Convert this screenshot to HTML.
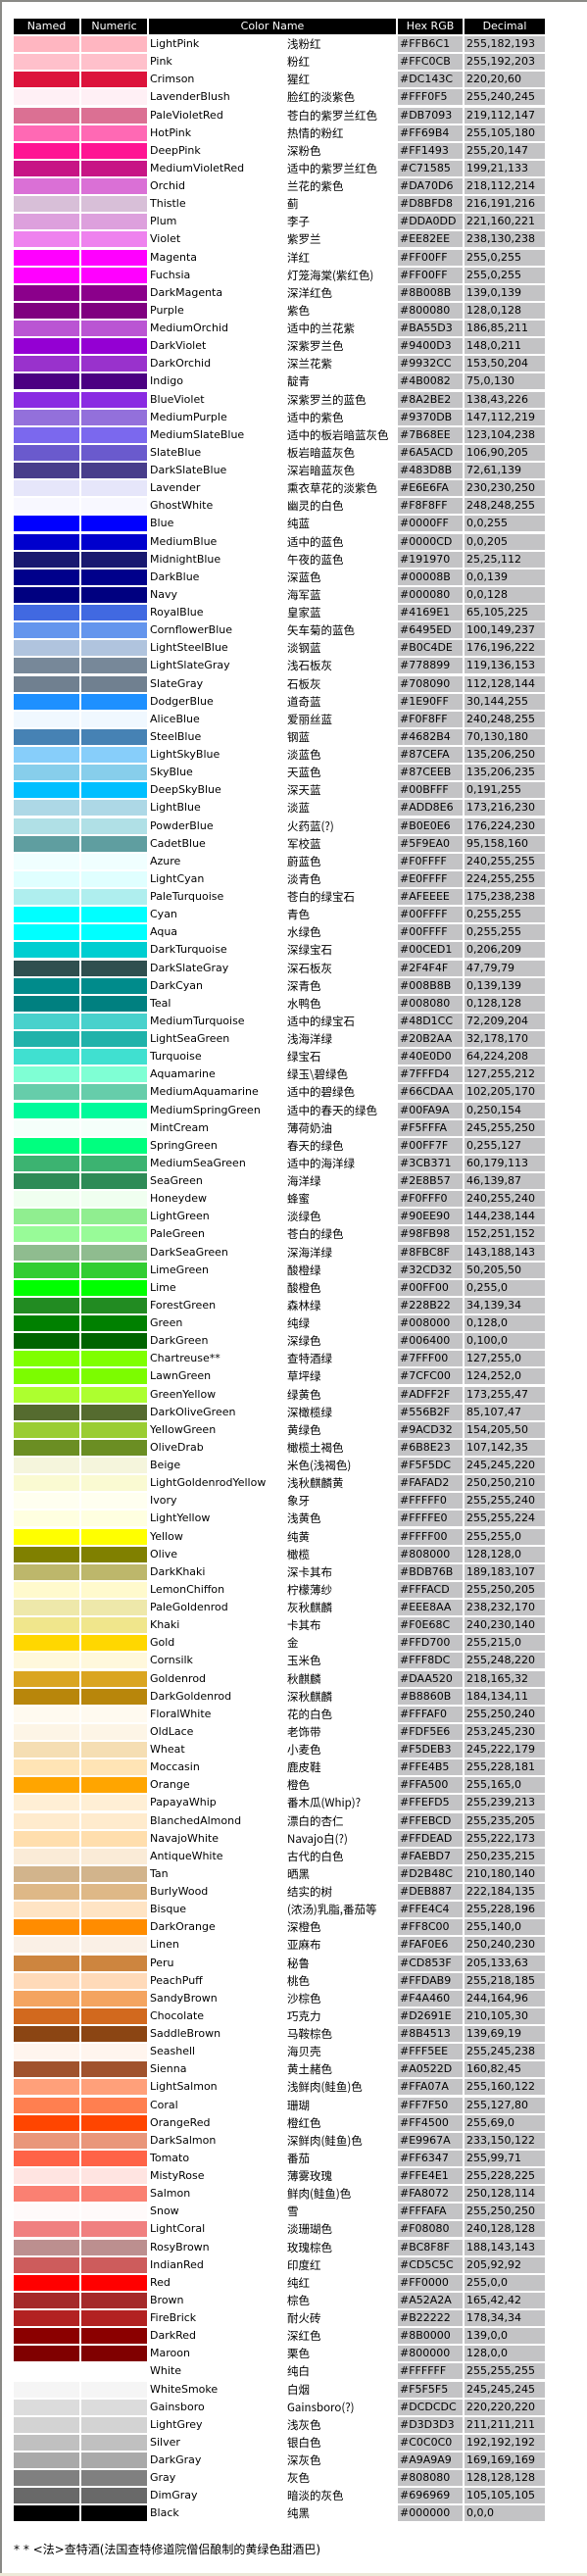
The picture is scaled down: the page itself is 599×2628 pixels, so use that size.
<!DOCTYPE html>
<html><head><meta charset="utf-8"><style>
html,body{margin:0;padding:0;background:#fff}
body{width:599px;height:2628px;position:relative;overflow:hidden;font-family:"DejaVu Sans","Liberation Sans","Noto Sans CJK SC",sans-serif;font-size:11px;color:#000}
.fr{position:absolute;left:0;top:0;width:599px;height:2625px;border-top:2px solid #8a8a86;border-left:2px solid #8a8a86;box-sizing:border-box}
.bt{position:absolute;left:0;top:2625px;width:599px;height:3px;background:#ece9d8}
.hd{position:absolute;left:0;top:19px;height:16px;width:599px}
.hd div{position:absolute;top:0;height:16px;background:#000;color:#fff;text-align:center;line-height:16px;font-size:11px}
#rows{position:absolute;left:0;top:37px;width:599px}
.r{position:relative;height:18.13px}
.r i,.r b,.r u,.r s,.r em{position:absolute;top:0;height:16px;line-height:16px;font-style:normal;font-weight:normal;text-decoration:none;white-space:nowrap}
.r i{left:14px;width:67px}
.r i+i{left:83px;width:67px}
.r b{left:153px}
.r u{left:293px;font-family:"Noto Sans CJK SC","WenQuanYi Zen Hei",sans-serif;font-size:11.5px}
.r s{left:406px;width:66px;background:#c3c3c5;padding-left:2px;box-sizing:border-box}
.r em{left:474px;width:82px;background:#c3c3c5;padding-left:2px;box-sizing:border-box}
.ft{position:absolute;left:14px;top:2592px;font-size:12px;font-family:"DejaVu Sans","Noto Sans CJK SC",sans-serif;white-space:nowrap}
</style></head><body>
<div class="fr"></div><div class="bt"></div>
<div class="hd">
<div style="left:14px;width:67px">Named</div>
<div style="left:83px;width:67px">Numeric</div>
<div style="left:152px;width:252px">Color Name</div>
<div style="left:406px;width:66px">Hex RGB</div>
<div style="left:474px;width:82px">Decimal</div>
</div>
<div id="rows">
<div class="r"><i style="background:#FFB6C1"></i><i style="background:#FFB6C1"></i><b>LightPink</b><u>浅粉红</u><s>#FFB6C1</s><em>255,182,193</em></div>
<div class="r"><i style="background:#FFC0CB"></i><i style="background:#FFC0CB"></i><b>Pink</b><u>粉红</u><s>#FFC0CB</s><em>255,192,203</em></div>
<div class="r"><i style="background:#DC143C"></i><i style="background:#DC143C"></i><b>Crimson</b><u>猩红</u><s>#DC143C</s><em>220,20,60</em></div>
<div class="r"><i style="background:#FFF0F5"></i><i style="background:#FFF0F5"></i><b>LavenderBlush</b><u>脸红的淡紫色</u><s>#FFF0F5</s><em>255,240,245</em></div>
<div class="r"><i style="background:#DB7093"></i><i style="background:#DB7093"></i><b>PaleVioletRed</b><u>苍白的紫罗兰红色</u><s>#DB7093</s><em>219,112,147</em></div>
<div class="r"><i style="background:#FF69B4"></i><i style="background:#FF69B4"></i><b>HotPink</b><u>热情的粉红</u><s>#FF69B4</s><em>255,105,180</em></div>
<div class="r"><i style="background:#FF1493"></i><i style="background:#FF1493"></i><b>DeepPink</b><u>深粉色</u><s>#FF1493</s><em>255,20,147</em></div>
<div class="r"><i style="background:#C71585"></i><i style="background:#C71585"></i><b>MediumVioletRed</b><u>适中的紫罗兰红色</u><s>#C71585</s><em>199,21,133</em></div>
<div class="r"><i style="background:#DA70D6"></i><i style="background:#DA70D6"></i><b>Orchid</b><u>兰花的紫色</u><s>#DA70D6</s><em>218,112,214</em></div>
<div class="r"><i style="background:#D8BFD8"></i><i style="background:#D8BFD8"></i><b>Thistle</b><u>蓟</u><s>#D8BFD8</s><em>216,191,216</em></div>
<div class="r"><i style="background:#DDA0DD"></i><i style="background:#DDA0DD"></i><b>Plum</b><u>李子</u><s>#DDA0DD</s><em>221,160,221</em></div>
<div class="r"><i style="background:#EE82EE"></i><i style="background:#EE82EE"></i><b>Violet</b><u>紫罗兰</u><s>#EE82EE</s><em>238,130,238</em></div>
<div class="r"><i style="background:#FF00FF"></i><i style="background:#FF00FF"></i><b>Magenta</b><u>洋红</u><s>#FF00FF</s><em>255,0,255</em></div>
<div class="r"><i style="background:#FF00FF"></i><i style="background:#FF00FF"></i><b>Fuchsia</b><u>灯笼海棠(紫红色)</u><s>#FF00FF</s><em>255,0,255</em></div>
<div class="r"><i style="background:#8B008B"></i><i style="background:#8B008B"></i><b>DarkMagenta</b><u>深洋红色</u><s>#8B008B</s><em>139,0,139</em></div>
<div class="r"><i style="background:#800080"></i><i style="background:#800080"></i><b>Purple</b><u>紫色</u><s>#800080</s><em>128,0,128</em></div>
<div class="r"><i style="background:#BA55D3"></i><i style="background:#BA55D3"></i><b>MediumOrchid</b><u>适中的兰花紫</u><s>#BA55D3</s><em>186,85,211</em></div>
<div class="r"><i style="background:#9400D3"></i><i style="background:#9400D3"></i><b>DarkViolet</b><u>深紫罗兰色</u><s>#9400D3</s><em>148,0,211</em></div>
<div class="r"><i style="background:#9932CC"></i><i style="background:#9932CC"></i><b>DarkOrchid</b><u>深兰花紫</u><s>#9932CC</s><em>153,50,204</em></div>
<div class="r"><i style="background:#4B0082"></i><i style="background:#4B0082"></i><b>Indigo</b><u>靛青</u><s>#4B0082</s><em>75,0,130</em></div>
<div class="r"><i style="background:#8A2BE2"></i><i style="background:#8A2BE2"></i><b>BlueViolet</b><u>深紫罗兰的蓝色</u><s>#8A2BE2</s><em>138,43,226</em></div>
<div class="r"><i style="background:#9370DB"></i><i style="background:#9370DB"></i><b>MediumPurple</b><u>适中的紫色</u><s>#9370DB</s><em>147,112,219</em></div>
<div class="r"><i style="background:#7B68EE"></i><i style="background:#7B68EE"></i><b>MediumSlateBlue</b><u>适中的板岩暗蓝灰色</u><s>#7B68EE</s><em>123,104,238</em></div>
<div class="r"><i style="background:#6A5ACD"></i><i style="background:#6A5ACD"></i><b>SlateBlue</b><u>板岩暗蓝灰色</u><s>#6A5ACD</s><em>106,90,205</em></div>
<div class="r"><i style="background:#483D8B"></i><i style="background:#483D8B"></i><b>DarkSlateBlue</b><u>深岩暗蓝灰色</u><s>#483D8B</s><em>72,61,139</em></div>
<div class="r"><i style="background:#E6E6FA"></i><i style="background:#E6E6FA"></i><b>Lavender</b><u>熏衣草花的淡紫色</u><s>#E6E6FA</s><em>230,230,250</em></div>
<div class="r"><i style="background:#F8F8FF"></i><i style="background:#F8F8FF"></i><b>GhostWhite</b><u>幽灵的白色</u><s>#F8F8FF</s><em>248,248,255</em></div>
<div class="r"><i style="background:#0000FF"></i><i style="background:#0000FF"></i><b>Blue</b><u>纯蓝</u><s>#0000FF</s><em>0,0,255</em></div>
<div class="r"><i style="background:#0000CD"></i><i style="background:#0000CD"></i><b>MediumBlue</b><u>适中的蓝色</u><s>#0000CD</s><em>0,0,205</em></div>
<div class="r"><i style="background:#191970"></i><i style="background:#191970"></i><b>MidnightBlue</b><u>午夜的蓝色</u><s>#191970</s><em>25,25,112</em></div>
<div class="r"><i style="background:#00008B"></i><i style="background:#00008B"></i><b>DarkBlue</b><u>深蓝色</u><s>#00008B</s><em>0,0,139</em></div>
<div class="r"><i style="background:#000080"></i><i style="background:#000080"></i><b>Navy</b><u>海军蓝</u><s>#000080</s><em>0,0,128</em></div>
<div class="r"><i style="background:#4169E1"></i><i style="background:#4169E1"></i><b>RoyalBlue</b><u>皇家蓝</u><s>#4169E1</s><em>65,105,225</em></div>
<div class="r"><i style="background:#6495ED"></i><i style="background:#6495ED"></i><b>CornflowerBlue</b><u>矢车菊的蓝色</u><s>#6495ED</s><em>100,149,237</em></div>
<div class="r"><i style="background:#B0C4DE"></i><i style="background:#B0C4DE"></i><b>LightSteelBlue</b><u>淡钢蓝</u><s>#B0C4DE</s><em>176,196,222</em></div>
<div class="r"><i style="background:#778899"></i><i style="background:#778899"></i><b>LightSlateGray</b><u>浅石板灰</u><s>#778899</s><em>119,136,153</em></div>
<div class="r"><i style="background:#708090"></i><i style="background:#708090"></i><b>SlateGray</b><u>石板灰</u><s>#708090</s><em>112,128,144</em></div>
<div class="r"><i style="background:#1E90FF"></i><i style="background:#1E90FF"></i><b>DodgerBlue</b><u>道奇蓝</u><s>#1E90FF</s><em>30,144,255</em></div>
<div class="r"><i style="background:#F0F8FF"></i><i style="background:#F0F8FF"></i><b>AliceBlue</b><u>爱丽丝蓝</u><s>#F0F8FF</s><em>240,248,255</em></div>
<div class="r"><i style="background:#4682B4"></i><i style="background:#4682B4"></i><b>SteelBlue</b><u>钢蓝</u><s>#4682B4</s><em>70,130,180</em></div>
<div class="r"><i style="background:#87CEFA"></i><i style="background:#87CEFA"></i><b>LightSkyBlue</b><u>淡蓝色</u><s>#87CEFA</s><em>135,206,250</em></div>
<div class="r"><i style="background:#87CEEB"></i><i style="background:#87CEEB"></i><b>SkyBlue</b><u>天蓝色</u><s>#87CEEB</s><em>135,206,235</em></div>
<div class="r"><i style="background:#00BFFF"></i><i style="background:#00BFFF"></i><b>DeepSkyBlue</b><u>深天蓝</u><s>#00BFFF</s><em>0,191,255</em></div>
<div class="r"><i style="background:#ADD8E6"></i><i style="background:#ADD8E6"></i><b>LightBlue</b><u>淡蓝</u><s>#ADD8E6</s><em>173,216,230</em></div>
<div class="r"><i style="background:#B0E0E6"></i><i style="background:#B0E0E6"></i><b>PowderBlue</b><u>火药蓝(?)</u><s>#B0E0E6</s><em>176,224,230</em></div>
<div class="r"><i style="background:#5F9EA0"></i><i style="background:#5F9EA0"></i><b>CadetBlue</b><u>军校蓝</u><s>#5F9EA0</s><em>95,158,160</em></div>
<div class="r"><i style="background:#F0FFFF"></i><i style="background:#F0FFFF"></i><b>Azure</b><u>蔚蓝色</u><s>#F0FFFF</s><em>240,255,255</em></div>
<div class="r"><i style="background:#E0FFFF"></i><i style="background:#E0FFFF"></i><b>LightCyan</b><u>淡青色</u><s>#E0FFFF</s><em>224,255,255</em></div>
<div class="r"><i style="background:#AFEEEE"></i><i style="background:#AFEEEE"></i><b>PaleTurquoise</b><u>苍白的绿宝石</u><s>#AFEEEE</s><em>175,238,238</em></div>
<div class="r"><i style="background:#00FFFF"></i><i style="background:#00FFFF"></i><b>Cyan</b><u>青色</u><s>#00FFFF</s><em>0,255,255</em></div>
<div class="r"><i style="background:#00FFFF"></i><i style="background:#00FFFF"></i><b>Aqua</b><u>水绿色</u><s>#00FFFF</s><em>0,255,255</em></div>
<div class="r"><i style="background:#00CED1"></i><i style="background:#00CED1"></i><b>DarkTurquoise</b><u>深绿宝石</u><s>#00CED1</s><em>0,206,209</em></div>
<div class="r"><i style="background:#2F4F4F"></i><i style="background:#2F4F4F"></i><b>DarkSlateGray</b><u>深石板灰</u><s>#2F4F4F</s><em>47,79,79</em></div>
<div class="r"><i style="background:#008B8B"></i><i style="background:#008B8B"></i><b>DarkCyan</b><u>深青色</u><s>#008B8B</s><em>0,139,139</em></div>
<div class="r"><i style="background:#008080"></i><i style="background:#008080"></i><b>Teal</b><u>水鸭色</u><s>#008080</s><em>0,128,128</em></div>
<div class="r"><i style="background:#48D1CC"></i><i style="background:#48D1CC"></i><b>MediumTurquoise</b><u>适中的绿宝石</u><s>#48D1CC</s><em>72,209,204</em></div>
<div class="r"><i style="background:#20B2AA"></i><i style="background:#20B2AA"></i><b>LightSeaGreen</b><u>浅海洋绿</u><s>#20B2AA</s><em>32,178,170</em></div>
<div class="r"><i style="background:#40E0D0"></i><i style="background:#40E0D0"></i><b>Turquoise</b><u>绿宝石</u><s>#40E0D0</s><em>64,224,208</em></div>
<div class="r"><i style="background:#7FFFD4"></i><i style="background:#7FFFD4"></i><b>Aquamarine</b><u>绿玉\碧绿色</u><s>#7FFFD4</s><em>127,255,212</em></div>
<div class="r"><i style="background:#66CDAA"></i><i style="background:#66CDAA"></i><b>MediumAquamarine</b><u>适中的碧绿色</u><s>#66CDAA</s><em>102,205,170</em></div>
<div class="r"><i style="background:#00FA9A"></i><i style="background:#00FA9A"></i><b>MediumSpringGreen</b><u>适中的春天的绿色</u><s>#00FA9A</s><em>0,250,154</em></div>
<div class="r"><i style="background:#F5FFFA"></i><i style="background:#F5FFFA"></i><b>MintCream</b><u>薄荷奶油</u><s>#F5FFFA</s><em>245,255,250</em></div>
<div class="r"><i style="background:#00FF7F"></i><i style="background:#00FF7F"></i><b>SpringGreen</b><u>春天的绿色</u><s>#00FF7F</s><em>0,255,127</em></div>
<div class="r"><i style="background:#3CB371"></i><i style="background:#3CB371"></i><b>MediumSeaGreen</b><u>适中的海洋绿</u><s>#3CB371</s><em>60,179,113</em></div>
<div class="r"><i style="background:#2E8B57"></i><i style="background:#2E8B57"></i><b>SeaGreen</b><u>海洋绿</u><s>#2E8B57</s><em>46,139,87</em></div>
<div class="r"><i style="background:#F0FFF0"></i><i style="background:#F0FFF0"></i><b>Honeydew</b><u>蜂蜜</u><s>#F0FFF0</s><em>240,255,240</em></div>
<div class="r"><i style="background:#90EE90"></i><i style="background:#90EE90"></i><b>LightGreen</b><u>淡绿色</u><s>#90EE90</s><em>144,238,144</em></div>
<div class="r"><i style="background:#98FB98"></i><i style="background:#98FB98"></i><b>PaleGreen</b><u>苍白的绿色</u><s>#98FB98</s><em>152,251,152</em></div>
<div class="r"><i style="background:#8FBC8F"></i><i style="background:#8FBC8F"></i><b>DarkSeaGreen</b><u>深海洋绿</u><s>#8FBC8F</s><em>143,188,143</em></div>
<div class="r"><i style="background:#32CD32"></i><i style="background:#32CD32"></i><b>LimeGreen</b><u>酸橙绿</u><s>#32CD32</s><em>50,205,50</em></div>
<div class="r"><i style="background:#00FF00"></i><i style="background:#00FF00"></i><b>Lime</b><u>酸橙色</u><s>#00FF00</s><em>0,255,0</em></div>
<div class="r"><i style="background:#228B22"></i><i style="background:#228B22"></i><b>ForestGreen</b><u>森林绿</u><s>#228B22</s><em>34,139,34</em></div>
<div class="r"><i style="background:#008000"></i><i style="background:#008000"></i><b>Green</b><u>纯绿</u><s>#008000</s><em>0,128,0</em></div>
<div class="r"><i style="background:#006400"></i><i style="background:#006400"></i><b>DarkGreen</b><u>深绿色</u><s>#006400</s><em>0,100,0</em></div>
<div class="r"><i style="background:#7FFF00"></i><i style="background:#7FFF00"></i><b>Chartreuse**</b><u>查特酒绿</u><s>#7FFF00</s><em>127,255,0</em></div>
<div class="r"><i style="background:#7CFC00"></i><i style="background:#7CFC00"></i><b>LawnGreen</b><u>草坪绿</u><s>#7CFC00</s><em>124,252,0</em></div>
<div class="r"><i style="background:#ADFF2F"></i><i style="background:#ADFF2F"></i><b>GreenYellow</b><u>绿黄色</u><s>#ADFF2F</s><em>173,255,47</em></div>
<div class="r"><i style="background:#556B2F"></i><i style="background:#556B2F"></i><b>DarkOliveGreen</b><u>深橄榄绿</u><s>#556B2F</s><em>85,107,47</em></div>
<div class="r"><i style="background:#9ACD32"></i><i style="background:#9ACD32"></i><b>YellowGreen</b><u>黄绿色</u><s>#9ACD32</s><em>154,205,50</em></div>
<div class="r"><i style="background:#6B8E23"></i><i style="background:#6B8E23"></i><b>OliveDrab</b><u>橄榄土褐色</u><s>#6B8E23</s><em>107,142,35</em></div>
<div class="r"><i style="background:#F5F5DC"></i><i style="background:#F5F5DC"></i><b>Beige</b><u>米色(浅褐色)</u><s>#F5F5DC</s><em>245,245,220</em></div>
<div class="r"><i style="background:#FAFAD2"></i><i style="background:#FAFAD2"></i><b>LightGoldenrodYellow</b><u>浅秋麒麟黄</u><s>#FAFAD2</s><em>250,250,210</em></div>
<div class="r"><i style="background:#FFFFF0"></i><i style="background:#FFFFF0"></i><b>Ivory</b><u>象牙</u><s>#FFFFF0</s><em>255,255,240</em></div>
<div class="r"><i style="background:#FFFFE0"></i><i style="background:#FFFFE0"></i><b>LightYellow</b><u>浅黄色</u><s>#FFFFE0</s><em>255,255,224</em></div>
<div class="r"><i style="background:#FFFF00"></i><i style="background:#FFFF00"></i><b>Yellow</b><u>纯黄</u><s>#FFFF00</s><em>255,255,0</em></div>
<div class="r"><i style="background:#808000"></i><i style="background:#808000"></i><b>Olive</b><u>橄榄</u><s>#808000</s><em>128,128,0</em></div>
<div class="r"><i style="background:#BDB76B"></i><i style="background:#BDB76B"></i><b>DarkKhaki</b><u>深卡其布</u><s>#BDB76B</s><em>189,183,107</em></div>
<div class="r"><i style="background:#FFFACD"></i><i style="background:#FFFACD"></i><b>LemonChiffon</b><u>柠檬薄纱</u><s>#FFFACD</s><em>255,250,205</em></div>
<div class="r"><i style="background:#EEE8AA"></i><i style="background:#EEE8AA"></i><b>PaleGoldenrod</b><u>灰秋麒麟</u><s>#EEE8AA</s><em>238,232,170</em></div>
<div class="r"><i style="background:#F0E68C"></i><i style="background:#F0E68C"></i><b>Khaki</b><u>卡其布</u><s>#F0E68C</s><em>240,230,140</em></div>
<div class="r"><i style="background:#FFD700"></i><i style="background:#FFD700"></i><b>Gold</b><u>金</u><s>#FFD700</s><em>255,215,0</em></div>
<div class="r"><i style="background:#FFF8DC"></i><i style="background:#FFF8DC"></i><b>Cornsilk</b><u>玉米色</u><s>#FFF8DC</s><em>255,248,220</em></div>
<div class="r"><i style="background:#DAA520"></i><i style="background:#DAA520"></i><b>Goldenrod</b><u>秋麒麟</u><s>#DAA520</s><em>218,165,32</em></div>
<div class="r"><i style="background:#B8860B"></i><i style="background:#B8860B"></i><b>DarkGoldenrod</b><u>深秋麒麟</u><s>#B8860B</s><em>184,134,11</em></div>
<div class="r"><i style="background:#FFFAF0"></i><i style="background:#FFFAF0"></i><b>FloralWhite</b><u>花的白色</u><s>#FFFAF0</s><em>255,250,240</em></div>
<div class="r"><i style="background:#FDF5E6"></i><i style="background:#FDF5E6"></i><b>OldLace</b><u>老饰带</u><s>#FDF5E6</s><em>253,245,230</em></div>
<div class="r"><i style="background:#F5DEB3"></i><i style="background:#F5DEB3"></i><b>Wheat</b><u>小麦色</u><s>#F5DEB3</s><em>245,222,179</em></div>
<div class="r"><i style="background:#FFE4B5"></i><i style="background:#FFE4B5"></i><b>Moccasin</b><u>鹿皮鞋</u><s>#FFE4B5</s><em>255,228,181</em></div>
<div class="r"><i style="background:#FFA500"></i><i style="background:#FFA500"></i><b>Orange</b><u>橙色</u><s>#FFA500</s><em>255,165,0</em></div>
<div class="r"><i style="background:#FFEFD5"></i><i style="background:#FFEFD5"></i><b>PapayaWhip</b><u>番木瓜(Whip)?</u><s>#FFEFD5</s><em>255,239,213</em></div>
<div class="r"><i style="background:#FFEBCD"></i><i style="background:#FFEBCD"></i><b>BlanchedAlmond</b><u>漂白的杏仁</u><s>#FFEBCD</s><em>255,235,205</em></div>
<div class="r"><i style="background:#FFDEAD"></i><i style="background:#FFDEAD"></i><b>NavajoWhite</b><u>Navajo白(?)</u><s>#FFDEAD</s><em>255,222,173</em></div>
<div class="r"><i style="background:#FAEBD7"></i><i style="background:#FAEBD7"></i><b>AntiqueWhite</b><u>古代的白色</u><s>#FAEBD7</s><em>250,235,215</em></div>
<div class="r"><i style="background:#D2B48C"></i><i style="background:#D2B48C"></i><b>Tan</b><u>晒黑</u><s>#D2B48C</s><em>210,180,140</em></div>
<div class="r"><i style="background:#DEB887"></i><i style="background:#DEB887"></i><b>BurlyWood</b><u>结实的树</u><s>#DEB887</s><em>222,184,135</em></div>
<div class="r"><i style="background:#FFE4C4"></i><i style="background:#FFE4C4"></i><b>Bisque</b><u>(浓汤)乳脂,番茄等</u><s>#FFE4C4</s><em>255,228,196</em></div>
<div class="r"><i style="background:#FF8C00"></i><i style="background:#FF8C00"></i><b>DarkOrange</b><u>深橙色</u><s>#FF8C00</s><em>255,140,0</em></div>
<div class="r"><i style="background:#FAF0E6"></i><i style="background:#FAF0E6"></i><b>Linen</b><u>亚麻布</u><s>#FAF0E6</s><em>250,240,230</em></div>
<div class="r"><i style="background:#CD853F"></i><i style="background:#CD853F"></i><b>Peru</b><u>秘鲁</u><s>#CD853F</s><em>205,133,63</em></div>
<div class="r"><i style="background:#FFDAB9"></i><i style="background:#FFDAB9"></i><b>PeachPuff</b><u>桃色</u><s>#FFDAB9</s><em>255,218,185</em></div>
<div class="r"><i style="background:#F4A460"></i><i style="background:#F4A460"></i><b>SandyBrown</b><u>沙棕色</u><s>#F4A460</s><em>244,164,96</em></div>
<div class="r"><i style="background:#D2691E"></i><i style="background:#D2691E"></i><b>Chocolate</b><u>巧克力</u><s>#D2691E</s><em>210,105,30</em></div>
<div class="r"><i style="background:#8B4513"></i><i style="background:#8B4513"></i><b>SaddleBrown</b><u>马鞍棕色</u><s>#8B4513</s><em>139,69,19</em></div>
<div class="r"><i style="background:#FFF5EE"></i><i style="background:#FFF5EE"></i><b>Seashell</b><u>海贝壳</u><s>#FFF5EE</s><em>255,245,238</em></div>
<div class="r"><i style="background:#A0522D"></i><i style="background:#A0522D"></i><b>Sienna</b><u>黄土赭色</u><s>#A0522D</s><em>160,82,45</em></div>
<div class="r"><i style="background:#FFA07A"></i><i style="background:#FFA07A"></i><b>LightSalmon</b><u>浅鲜肉(鲑鱼)色</u><s>#FFA07A</s><em>255,160,122</em></div>
<div class="r"><i style="background:#FF7F50"></i><i style="background:#FF7F50"></i><b>Coral</b><u>珊瑚</u><s>#FF7F50</s><em>255,127,80</em></div>
<div class="r"><i style="background:#FF4500"></i><i style="background:#FF4500"></i><b>OrangeRed</b><u>橙红色</u><s>#FF4500</s><em>255,69,0</em></div>
<div class="r"><i style="background:#E9967A"></i><i style="background:#E9967A"></i><b>DarkSalmon</b><u>深鲜肉(鲑鱼)色</u><s>#E9967A</s><em>233,150,122</em></div>
<div class="r"><i style="background:#FF6347"></i><i style="background:#FF6347"></i><b>Tomato</b><u>番茄</u><s>#FF6347</s><em>255,99,71</em></div>
<div class="r"><i style="background:#FFE4E1"></i><i style="background:#FFE4E1"></i><b>MistyRose</b><u>薄雾玫瑰</u><s>#FFE4E1</s><em>255,228,225</em></div>
<div class="r"><i style="background:#FA8072"></i><i style="background:#FA8072"></i><b>Salmon</b><u>鲜肉(鲑鱼)色</u><s>#FA8072</s><em>250,128,114</em></div>
<div class="r"><i style="background:#FFFAFA"></i><i style="background:#FFFAFA"></i><b>Snow</b><u>雪</u><s>#FFFAFA</s><em>255,250,250</em></div>
<div class="r"><i style="background:#F08080"></i><i style="background:#F08080"></i><b>LightCoral</b><u>淡珊瑚色</u><s>#F08080</s><em>240,128,128</em></div>
<div class="r"><i style="background:#BC8F8F"></i><i style="background:#BC8F8F"></i><b>RosyBrown</b><u>玫瑰棕色</u><s>#BC8F8F</s><em>188,143,143</em></div>
<div class="r"><i style="background:#CD5C5C"></i><i style="background:#CD5C5C"></i><b>IndianRed</b><u>印度红</u><s>#CD5C5C</s><em>205,92,92</em></div>
<div class="r"><i style="background:#FF0000"></i><i style="background:#FF0000"></i><b>Red</b><u>纯红</u><s>#FF0000</s><em>255,0,0</em></div>
<div class="r"><i style="background:#A52A2A"></i><i style="background:#A52A2A"></i><b>Brown</b><u>棕色</u><s>#A52A2A</s><em>165,42,42</em></div>
<div class="r"><i style="background:#B22222"></i><i style="background:#B22222"></i><b>FireBrick</b><u>耐火砖</u><s>#B22222</s><em>178,34,34</em></div>
<div class="r"><i style="background:#8B0000"></i><i style="background:#8B0000"></i><b>DarkRed</b><u>深红色</u><s>#8B0000</s><em>139,0,0</em></div>
<div class="r"><i style="background:#800000"></i><i style="background:#800000"></i><b>Maroon</b><u>栗色</u><s>#800000</s><em>128,0,0</em></div>
<div class="r"><i style="background:#FFFFFF"></i><i style="background:#FFFFFF"></i><b>White</b><u>纯白</u><s>#FFFFFF</s><em>255,255,255</em></div>
<div class="r"><i style="background:#F5F5F5"></i><i style="background:#F5F5F5"></i><b>WhiteSmoke</b><u>白烟</u><s>#F5F5F5</s><em>245,245,245</em></div>
<div class="r"><i style="background:#DCDCDC"></i><i style="background:#DCDCDC"></i><b>Gainsboro</b><u>Gainsboro(?)</u><s>#DCDCDC</s><em>220,220,220</em></div>
<div class="r"><i style="background:#D3D3D3"></i><i style="background:#D3D3D3"></i><b>LightGrey</b><u>浅灰色</u><s>#D3D3D3</s><em>211,211,211</em></div>
<div class="r"><i style="background:#C0C0C0"></i><i style="background:#C0C0C0"></i><b>Silver</b><u>银白色</u><s>#C0C0C0</s><em>192,192,192</em></div>
<div class="r"><i style="background:#A9A9A9"></i><i style="background:#A9A9A9"></i><b>DarkGray</b><u>深灰色</u><s>#A9A9A9</s><em>169,169,169</em></div>
<div class="r"><i style="background:#808080"></i><i style="background:#808080"></i><b>Gray</b><u>灰色</u><s>#808080</s><em>128,128,128</em></div>
<div class="r"><i style="background:#696969"></i><i style="background:#696969"></i><b>DimGray</b><u>暗淡的灰色</u><s>#696969</s><em>105,105,105</em></div>
<div class="r"><i style="background:#000000"></i><i style="background:#000000"></i><b>Black</b><u>纯黑</u><s>#000000</s><em>0,0,0</em></div>
</div>
<div class="ft">* * &lt;法&gt;查特酒(法国查特修道院僧侣酿制的黄绿色甜酒巴)</div>
</body></html>
